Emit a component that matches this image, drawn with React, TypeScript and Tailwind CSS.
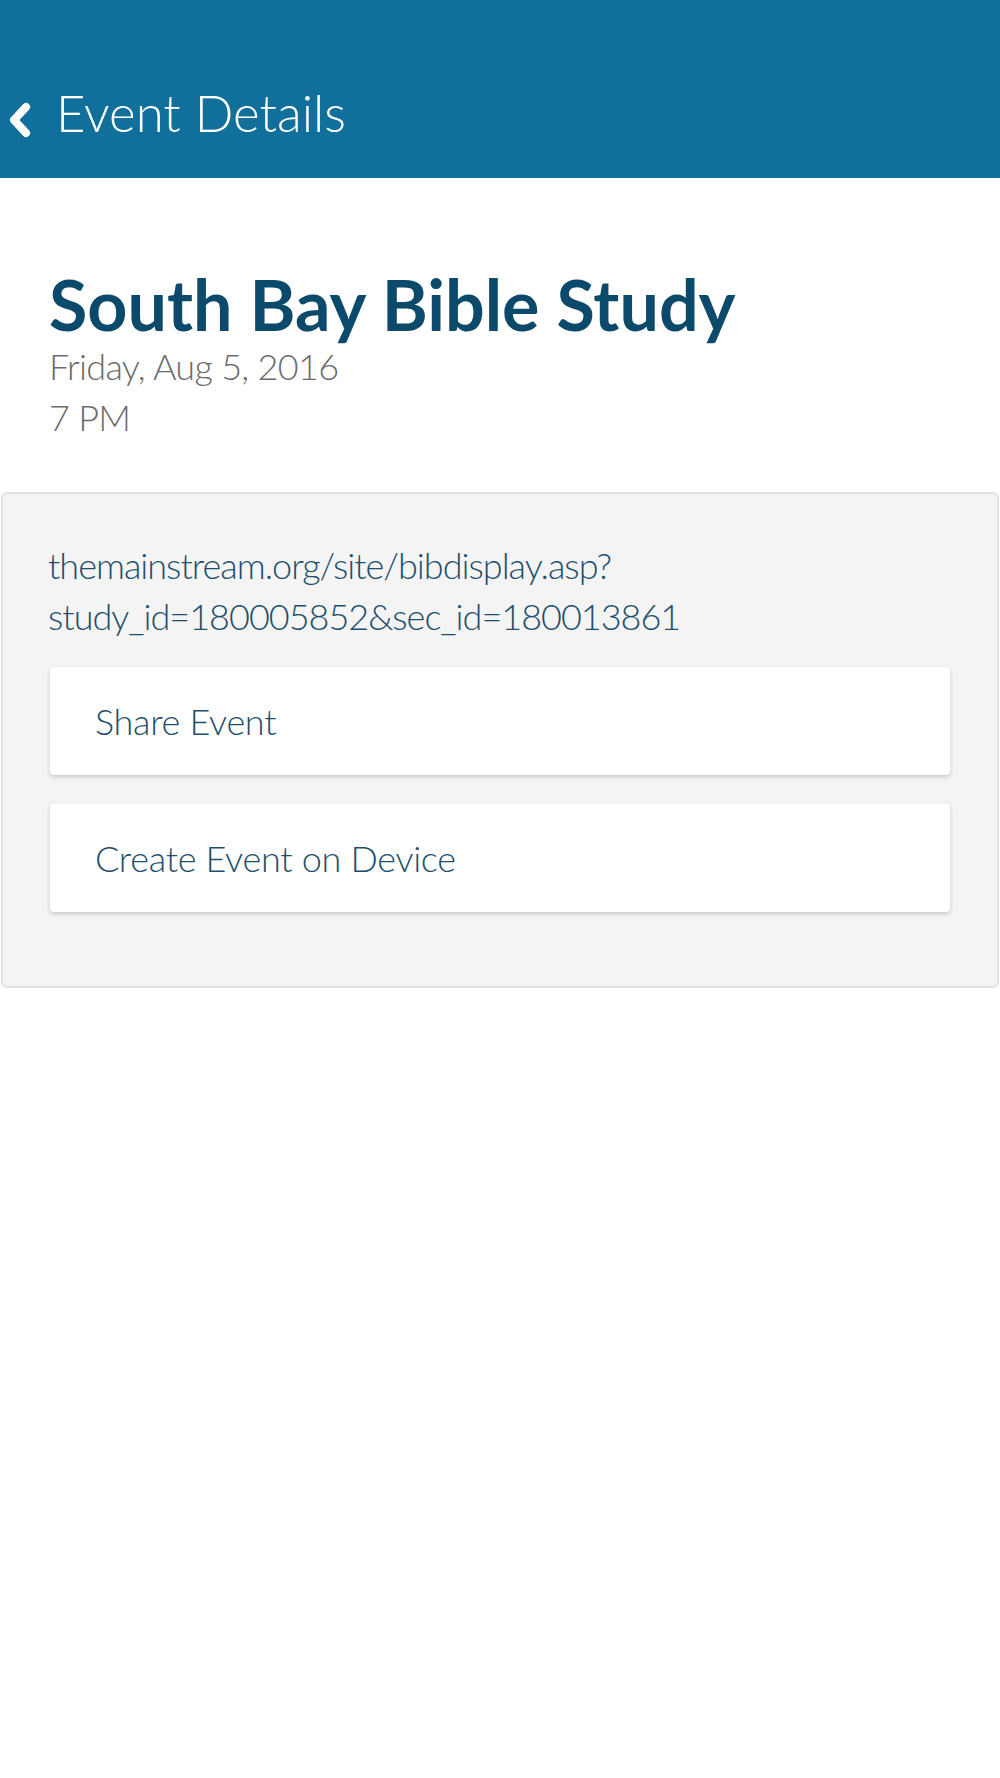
const ActionButton = ({ label }: { label: string }) => (
  <button className="w-full h-[108px] bg-white rounded-[4px] shadow-[0_2px_4px_rgba(0,0,0,0.18)] text-left pl-[45px] text-[36px] font-light tracking-[-0.3px] text-[#1d4f6c]">
    {label}
  </button>
);

const BackChevron = () => (
  <svg width="26" height="36" viewBox="0 0 26 36" className="ml-[5px] mt-[16px] shrink-0">
    <polyline points="21,5 9,18 21,31" fill="none" stroke="white" strokeWidth="8" strokeLinecap="round" strokeLinejoin="round" />
  </svg>
);

export default function App() {
  return (
    <div className="min-h-[1778px] bg-white font-['Lato','Open_Sans',sans-serif]">
      {/* Header */}
      <header className="h-[178px] bg-[#10709b] flex items-center pt-[46px]">
        <BackChevron />
        <h1 className="ml-[25px] text-[51px] font-light text-white leading-none">Event Details</h1>
      </header>

      {/* Event info */}
      <section className="px-[49px] pt-[89px] pb-[49px]">
        <h2 className="text-[70px] font-bold text-[#0b4a6b] leading-[74px]">South Bay Bible Study</h2>
        <p className="text-[36px] font-light tracking-[-0.7px] text-[#6b6b6b] leading-[51px]">Friday, Aug 5, 2016</p>
        <p className="text-[36px] font-light tracking-[-0.7px] text-[#6b6b6b] leading-[51px]">7 PM</p>
      </section>

      {/* Links card */}
      <div className="mx-[1px] bg-[#f4f4f4] border-2 border-[#e2e2e2] rounded-[6px] px-[47px] pt-[46px] pb-[74px]">
        <p className="-ml-[2px] text-[36px] font-light tracking-[-1px] text-[#1d4f6c] leading-[51px] break-all">
          themainstream.org/site/bibdisplay.asp?
          <br />
          study_id=180005852&amp;sec_id=180013861
        </p>
        <div className="mt-[25px] flex flex-col gap-[29px]">
          <ActionButton label="Share Event" />
          <ActionButton label="Create Event on Device" />
        </div>
      </div>
    </div>
  );
}
